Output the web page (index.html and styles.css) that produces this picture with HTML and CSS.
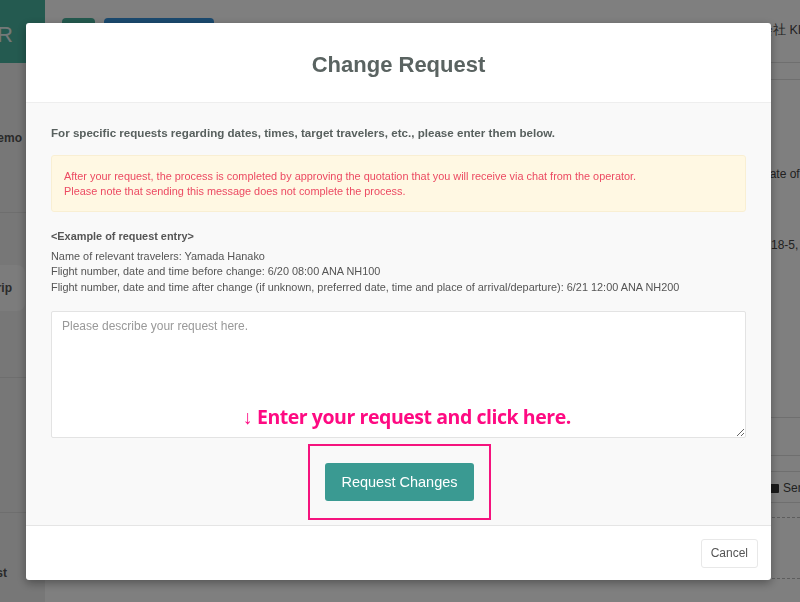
FILE: index.html
```html
<!DOCTYPE html>
<html lang="en">
<head>
    <meta charset="UTF-8">
    <meta name="viewport" content="width=device-width, initial-scale=1.0">
    <title>Change Request</title>
    <link rel="stylesheet" href="styles.css">
</head>
<body>
    <div class="page">
        <aside class="sidebar">
            <div class="logo"><span>BTR</span></div>
            <div class="side-section side-first"><span class="side-label">Memo</span></div>
            <div class="side-section side-second"><span class="side-label side-pill">Trip</span></div>
            <div class="side-section side-third"></div>
            <div class="side-section side-last"><span class="side-label">Request</span></div>
        </aside>

        <main class="main">
            <header class="topbar">
                <span class="top-btn top-btn-green"></span>
                <span class="top-btn top-btn-blue"></span>
                <span class="top-user">株式会社 KIT Travel</span>
            </header>
            <div class="subbar"></div>

            <div class="content">
                <div class="info-row info-date"><span class="info-value">Date of departure</span></div>
                <div class="info-row info-address"><span class="info-value">18-5, Minato-ku</span></div>
                <div class="info-row info-line"></div>
                <div class="info-row info-line info-line-2"></div>
                <div class="info-row info-line info-line-3"></div>
                <div class="info-row info-check"><span class="info-value"><span class="checkbox"></span>Send</span></div>
                <div class="info-row info-dashed"></div>
                <div class="info-row info-dashed info-tall"></div>
            </div>
        </main>
    </div>

    <div class="overlay">
        <div class="modal">
            <div class="modal-header">
                <h2 class="modal-title">Change Request</h2>
            </div>

            <div class="modal-body">
                <p class="lead">For specific requests regarding dates, times, target travelers, etc., please enter them below.</p>

                <div class="alert">
                    After your request, the process is completed by approving the quotation that you will receive via chat from the operator.<br>
                    Please note that sending this message does not complete the process.
                </div>

                <div class="example">
                    <p class="example-title">&lt;Example of request entry&gt;</p>
                    <p>Name of relevant travelers: Yamada Hanako</p>
                    <p>Flight number, date and time before change: 6/20 08:00 ANA NH100</p>
                    <p>Flight number, date and time after change (if unknown, preferred date, time and place of arrival/departure): 6/21 12:00 ANA NH200</p>
                </div>

                <div class="request-field">
                    <textarea class="request-input" placeholder="Please describe your request here."></textarea>
                    <span class="hint">↓ Enter your request and click here.</span>
                </div>

                <div class="submit-area">
                    <div class="highlight">
                        <button class="button button-primary">Request Changes</button>
                    </div>
                </div>
            </div>

            <div class="modal-footer">
                <button class="button button-cancel">Cancel</button>
            </div>
        </div>
    </div>
</body>
</html>
```

FILE: styles.css
```css
html, body {
    margin: 0;
    padding: 0;
    height: 100%;
    overflow: hidden;
}

body {
    font-family: 'Liberation Sans', Arial, sans-serif;
    background-color: #fff;
    color: #555;
}

p {
    margin: 0;
}

/* ---- page underneath the dialog ---- */

.page {
    display: flex;
    height: 602px;
}

.sidebar {
    width: 45px;
    flex-shrink: 0;
    background-color: #eee;
    display: flex;
    flex-direction: column;
}

.logo {
    height: 63px;
    box-sizing: border-box;
    padding: 7px 30px 0 0;
    background-color: #48b4a0;
    color: #e8f3f1;
    font-size: 22px;
    letter-spacing: 2px;
    display: flex;
    align-items: center;
    justify-content: flex-end;
    overflow: hidden;
}

.side-section {
    display: flex;
    align-items: center;
    justify-content: flex-end;
    overflow: hidden;
    border-bottom: 1px solid #dcdcdc;
    font-weight: bold;
    font-size: 12px;
    color: #555;
}

.side-first {
    height: 149px;
    padding-right: 23px;
}

.side-second {
    height: 164px;
    padding-right: 20px;
    align-items: flex-start;
}

.side-pill {
    margin-top: 52px;
    padding: 16px 13px 16px 30px;
    background-color: #f8f8f8;
    border-radius: 8px;
}

.side-third {
    height: 134px;
}

.side-last {
    flex: 1;
    border-bottom: none;
    align-items: flex-start;
    padding-right: 38px;
}

.side-last .side-label {
    margin-top: 53px;
}

.side-label {
    white-space: nowrap;
}

.main {
    flex: 1;
    display: flex;
    flex-direction: column;
    min-width: 0;
}

.topbar {
    height: 63px;
    border-bottom: 1px solid #dedede;
    display: flex;
    align-items: flex-start;
    padding: 18px 0 0 17px;
    box-sizing: border-box;
    gap: 9px;
}

.top-btn {
    height: 30px;
    border-radius: 4px;
}

.top-btn-green {
    width: 33px;
    background-color: #48b49e;
}

.top-btn-blue {
    width: 110px;
    background-color: #3694de;
}

.top-user {
    margin-left: auto;
    width: 66px;
    white-space: nowrap;
    font-size: 12.5px;
    color: #444;
    margin-top: 4px;
}

.subbar {
    height: 16px;
    border-bottom: 1px solid #dedede;
}

.content {
    display: flex;
    flex-direction: column;
    padding-left: 727px;
    font-size: 12px;
    line-height: 14px;
    color: #444;
}

.info-row {
    white-space: nowrap;
}

.info-date {
    margin-top: 87px;
    margin-left: -11px;
}

.info-address {
    margin-top: 57px;
    margin-left: -1px;
}

.info-line {
    margin-left: -727px;
    border-bottom: 1px solid #dedede;
    margin-top: 165px;
}

.info-line-2 {
    margin-top: 37px;
}

.info-line-3 {
    margin-top: 15px;
}

.info-check {
    margin-left: -727px;
    padding-left: 725px;
    margin-top: 9px;
    padding-bottom: 7px;
    border-bottom: 1px solid #dedede;
}

.checkbox {
    display: inline-block;
    width: 9px;
    height: 9px;
    background-color: #333;
    border-radius: 1px;
    margin-right: 4px;
    vertical-align: -1px;
}

.info-dashed {
    margin-left: -40px;
    border-bottom: 1px dashed #bbb;
    margin-top: 14px;
}

.info-tall {
    margin-top: 60px;
}

/* ---- dialog ---- */

.overlay {
    position: fixed;
    inset: 0;
    background-color: rgba(0, 0, 0, 0.5);
}

.modal {
    margin: 23px 0 0 26px;
    width: 745px;
    background-color: #fff;
    border-radius: 3px;
    box-shadow: 0 3px 10px rgba(0, 0, 0, 0.35);
    overflow: hidden;
}

.modal-header {
    height: 80px;
    display: flex;
    align-items: center;
    justify-content: center;
    border-bottom: 1px solid #eee;
    box-sizing: border-box;
}

.modal-title {
    margin: 4px 0 0;
    font-size: 22px;
    color: #5a6361;
}

.modal-body {
    background-color: #f9f9f9;
    padding: 21px 25px 5px;
}

.lead {
    font-size: 11.6px;
    font-weight: bold;
    color: #58605e;
    line-height: 17px;
}

.alert {
    margin-top: 14px;
    padding: 13px 12px 13px;
    background-color: #fff8e3;
    border: 1px solid #f9efd3;
    border-radius: 3px;
    color: #ec4a62;
    font-size: 10.9px;
    line-height: 14.5px;
}

.example {
    margin-top: 17px;
    font-size: 10.9px;
    line-height: 15.5px;
    color: #555;
}

.example-title {
    font-weight: bold;
    margin-bottom: 4px;
}

.request-field {
    position: relative;
    margin-top: 16px;
}

.request-input {
    display: block;
    width: 100%;
    height: 127px;
    box-sizing: border-box;
    border: 1px solid #e3e3e3;
    border-radius: 2px;
    padding: 7px 10px;
    font-family: 'Liberation Sans', Arial, sans-serif;
    font-size: 12px;
    color: #555;
    background-color: #fff;
}

.request-input::placeholder {
    color: #999;
}

.hint {
    position: absolute;
    left: 192px;
    top: 92px;
    font-family: 'Open Sans', 'Noto Sans', sans-serif;
    font-weight: bold;
    font-size: 19.5px;
    color: #fe0a82;
    white-space: nowrap;
    letter-spacing: -0.45px;
}

.submit-area {
    display: flex;
    justify-content: center;
    margin-top: 6px;
    padding-left: 2px;
}

.highlight {
    border: 2px solid #f5137e;
    padding: 17px 15px 17px;
}

.button {
    font-family: 'Liberation Sans', Arial, sans-serif;
    border-radius: 3px;
    cursor: pointer;
}

.button-primary {
    display: block;
    width: 149px;
    height: 38px;
    background-color: #3a9a92;
    color: #fff;
    border: none;
    font-size: 14.5px;
}

.modal-footer {
    border-top: 1px solid #e5e5e5;
    height: 55px;
    box-sizing: border-box;
    display: flex;
    align-items: center;
    justify-content: flex-end;
    padding-right: 13px;
}

.button-cancel {
    height: 29px;
    padding: 0 9px;
    background-color: #fff;
    border: 1px solid #e8e8e8;
    color: #555;
    font-size: 12px;
}
```
